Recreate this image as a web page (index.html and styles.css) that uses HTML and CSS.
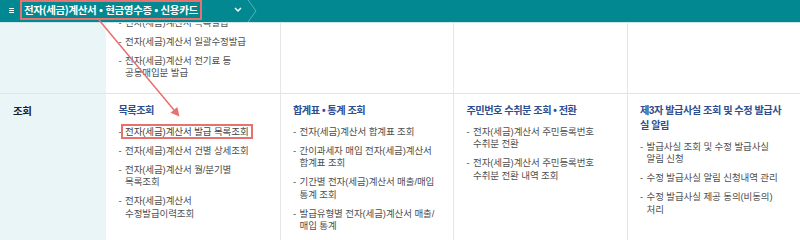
FILE: index.html
```html
<!DOCTYPE html>
<html lang="ko">
<head>
<meta charset="utf-8">
<title>전자(세금)계산서 메뉴</title>
<link rel="stylesheet" href="styles.css">
</head>
<body>
<div class="page">
  <header class="gnb">
    <svg class="ham" width="5" height="5" viewBox="0 0 5 5"><rect x="0" y="0" width="5" height="1" fill="#fff"/><rect x="0" y="2" width="5" height="1" fill="#fff"/><rect x="0" y="4" width="5" height="1" fill="#fff"/></svg>
    <div class="crumb">
      <span class="crumb-title">전자(세금)계산서 • 현금영수증 • 신용카드</span>
      <svg class="chev" width="8" height="6" viewBox="0 0 8 6"><polyline points="1,1 4,4 7,1" fill="none" stroke="#fff" stroke-width="1.5"/></svg>
    </div>
    <svg class="sep" width="12" height="22" viewBox="0 0 12 22"><polyline points="1,0 9,11 1,22" fill="none" stroke="rgba(255,255,255,0.35)" stroke-width="1"/></svg>
  </header>

  <div class="menu">
    <div class="row row-top">
      <div class="label"></div>
      <div class="col">
        <ul class="items">
          <li>전자(세금)계산서 목록발급</li>
          <li>전자(세금)계산서 일괄수정발급</li>
          <li>전자(세금)계산서 전기료 등<br>공동매입분 발급</li>
        </ul>
      </div>
      <div class="col"></div>
      <div class="col"></div>
      <div class="col"></div>
    </div>

    <div class="row">
      <div class="label">조회</div>
      <div class="col">
        <h3 class="heading">목록조회</h3>
        <ul class="items">
          <li><span class="hl">전자(세금)계산서 발급 목록조회</span></li>
          <li>전자(세금)계산서 건별 상세조회</li>
          <li>전자(세금)계산서 월/분기별<br>목록조회</li>
          <li>전자(세금)계산서<br>수정발급이력조회</li>
        </ul>
      </div>
      <div class="col">
        <h3 class="heading">합계표 • 통계 조회</h3>
        <ul class="items">
          <li>전자(세금)계산서 합계표 조회</li>
          <li>간이과세자 매입 전자(세금)계산서<br>합계표 조회</li>
          <li>기간별 전자(세금)계산서 매출/매입<br>통계 조회</li>
          <li>발급유형별 전자(세금)계산서 매출/<br>매입 통계</li>
        </ul>
      </div>
      <div class="col">
        <h3 class="heading">주민번호 수취분 조회 • 전환</h3>
        <ul class="items">
          <li>전자(세금)계산서 주민등록번호<br>수취분 전환</li>
          <li>전자(세금)계산서 주민등록번호<br>수취분 전환 내역 조회</li>
        </ul>
      </div>
      <div class="col">
        <h3 class="heading">제3자 발급사실 조회 및 수정 발급사<br>실 알림</h3>
        <ul class="items">
          <li>발급사실 조회 및 수정 발급사실<br>알림 신청</li>
          <li>수정 발급사실 알림 신청내역 관리</li>
          <li>수정 발급사실 제공 동의(비동의)<br>처리</li>
        </ul>
      </div>
    </div>
  </div>

  <svg class="annot" width="800" height="240" viewBox="0 0 800 240">
    <line x1="99" y1="20" x2="174" y2="110" stroke="#e8716f" stroke-width="1.5"/>
    <polygon points="179.5,116.5 170.5,112.8 177.3,107" fill="#e8716f"/>
  </svg>
</div>
</body>
</html>
```

FILE: styles.css
```css
* { box-sizing: border-box; }

html, body {
  margin: 0;
  padding: 0;
}

body {
  width: 800px;
  height: 240px;
  overflow: hidden;
  background: #fff;
  font-family: "Noto Sans CJK KR", "Noto Sans", sans-serif;
  color: #555;
}

.page {
  position: relative;
  width: 800px;
  height: 240px;
  overflow: hidden;
}

.gnb {
  position: absolute;
  top: 0;
  left: 0;
  right: 0;
  z-index: 2;
  height: 23px;
  background: #028891;
  border-bottom: 1px solid #cfe6e8;
  display: flex;
  align-items: flex-start;
  padding-left: 9px;
}

.ham {
  margin-top: 8px;
  flex: none;
}

.crumb {
  display: flex;
  align-items: flex-start;
  margin-left: 6px;
}

.crumb-title {
  display: block;
  width: 182px;
  height: 20px;
  line-height: 16px;
  padding: 0 0 0 2px;
  border: 2px solid #e8716f;
  color: #fff;
  font-weight: 700;
  font-size: 10.5px;
  letter-spacing: -0.35px;
  white-space: nowrap;
}

.chev {
  margin: 7px 0 0 32px;
  flex: none;
}

.sep {
  margin-left: 5px;
  flex: none;
}

/* menu grid */
.menu {
  display: flex;
  flex-direction: column;
}

.row {
  display: grid;
  grid-template-columns: 106px repeat(4, 1fr);
  border-top: 1px solid #dfe6e9;
}

.row-top {
  border-top: 0;
}

.label {
  background: #eaf5f8;
  padding: 8.5px 0 0 13px;
  font-size: 10.5px;
  line-height: 15px;
  font-weight: 700;
  color: #222;
  letter-spacing: -0.3px;
}

.col {
  padding: 8.5px 6px 14px 12.5px;
}

.col + .col {
  border-left: 1px solid #e6e6e6;
}

.row-top .col {
  padding-top: 16.5px;
  padding-bottom: 13.5px;
}

.heading {
  margin: 0 0 8px;
  font-family: "Liberation Sans", "Noto Sans CJK KR", sans-serif;
  font-size: 10.2px;
  line-height: 15px;
  font-weight: 700;
  color: #2d4e8f;
  letter-spacing: -0.5px;
}

.items {
  list-style: none;
  margin: 0;
  padding: 0;
}

.items li {
  font-family: "Liberation Sans", "Noto Sans CJK KR", sans-serif;
  font-size: 9.5px;
  line-height: 12.5px;
  letter-spacing: -0.1px;
  color: #4f4f4f;
  margin-bottom: 6.5px;
  padding-left: 6.5px;
  text-indent: -6.5px;
  white-space: nowrap;
}

.items li:last-child {
  margin-bottom: 0;
}

.items li::before {
  content: "-";
  display: inline-block;
  width: 6.5px;
  text-indent: 0;
}

.hl {
  display: inline-block;
  text-indent: 0;
  line-height: 11px;
  padding: 0 2px;
  margin: -3px 0 -1.5px -4px;
  border: 2px solid #e8716f;
  color: #444;
}

.annot {
  position: absolute;
  top: 0;
  left: 0;
  z-index: 3;
  pointer-events: none;
}
```
